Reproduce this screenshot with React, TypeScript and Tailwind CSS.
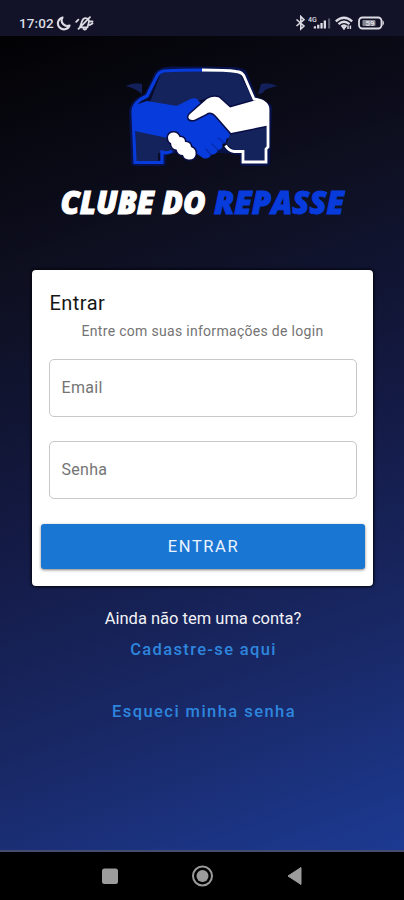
import React from "react";

function StatusBar() {
  return (
    <header className="flex h-9 shrink-0 items-center justify-between bg-[#121328] pt-[10px] pr-[19px] pl-[19px] text-[#dcdce4]">
      <div className="flex items-center">
        <span className="w-[37px] text-[13.5px] leading-4 font-medium tracking-[0.1px]">17:02</span>
        <svg className="h-4 w-4" viewBox="0 0 16 16" fill="none" stroke="currentColor" strokeWidth="2.1" strokeLinejoin="round">
          <path d="M6.500 2.500A6 6 0 1 0 13.500 10.500A5.600 5.600 0 0 1 6.500 2.500Z" />
        </svg>
        <svg className="ml-[3px] h-4 w-[19px]" viewBox="0 0 19 16" fill="none" stroke="currentColor" strokeWidth="1.8" strokeLinecap="round" strokeLinejoin="round">
          <path d="M5 12L7.2 5.8Q8.8 2.2 12.2 3.5Q14.6 4.6 13.8 7.5L12.5 12.3H5M8.5 14Q10 15 11.2 13.8M3.5 13.8L15 2.2M1.2 6.8L3.4 4.6M14.8 10L17.5 8.4M15.5 6.5H17.5" />
        </svg>
      </div>
      <div className="flex items-center">
        <svg className="h-4 w-[12px]" viewBox="0 0 12 16" fill="none" stroke="currentColor" strokeWidth="1.6">
          <path d="M1.500 4.500L9 11L5.800 14V1.500L9 4.700L1.500 11" />
        </svg>
        <svg className="ml-[1px] h-4 w-[24px]" viewBox="0 0 24 16" fill="currentColor">
          <text x="0" y="6.5" fontFamily="Roboto, sans-serif" fontSize="7" fontWeight="500">4G</text>
          <path d="M5.800 11.200h2.200v2.300H5.800zM9.100 9.800h2.300v3.700H9.100zM12.400 8h2.300v5.500h-2.300zM15.700 5.500h2.300v8h-2.300z" />
          <path opacity=".35" d="M20 3.500h2.200v10H20z" />
        </svg>
        <svg className="ml-[3px] h-4 w-[18px]" viewBox="0 0 18 16" fill="none" stroke="currentColor" strokeWidth="2.300">
          <path d="M.8 6.300Q9 -.8 17.200 6.300M3.500 9.200Q9 4.300 14.500 9.200M6.400 11.700Q9 9.300 11.600 11.700" />
          <path d="M8 12.500L9 14L10 12.500ZM13 10.500V14M15.400 10.500V14" strokeWidth="1.500" />
        </svg>
        <svg className="ml-[5px] h-4 w-[27px]" viewBox="0 0 27 16">
          <rect x="1" y="2.500" width="22.500" height="11" rx="3.400" fill="none" stroke="currentColor" strokeWidth="1.800" />
          <path d="M24.500 5Q27.500 8 24.500 11Z" fill="currentColor" />
          <rect x="4.500" y="5" width="13" height="6" rx="1" fill="#85858f" />
          <text x="12" y="11" textAnchor="middle" fontFamily="Roboto, sans-serif" fontSize="8" fontWeight="700" fill="currentColor">59</text>
        </svg>
      </div>
    </header>
  );
}

function Logo() {
  return (
    <svg className="h-[164px] w-[304px]" viewBox="50 60 304 164" role="img" aria-label="Clube do Repasse">
      <path d="M205 69.500H170Q161 70 157.500 74L147 96Q132 102 132 113L134 163H163V153L175 150L226 150L243 153V163H267L269 107L254 98L244 73Q240 70 232 70Z" fill="#090c24" stroke="#07114a" strokeWidth="6" strokeLinejoin="round" />
      <path d="M125.500 86Q134 82 142 84V94Q135 88 125.500 86ZM277.500 86Q269 82 261 84L258 94Q263 94 265 90Q269 88 277.500 86Z" fill="#13205a" />
      <path d="M161 73Q182 69 204 70Q226 70 240 74L253 100L230 107L218 97H212L194 102L177 107L150 102Z" fill="#14235c" />
      <path d="M136 130L168 137L178 150L170 153H158V161H136ZM231 133L267 125V161H244V150H234L226 144Z" fill="#14235c" />
      <path d="M203 70Q180 70 164 71Q159 72 157 76L147 96Q133 102 133 112L135 162.500H162V152Q167 154 172 151" fill="none" stroke="#083bdc" strokeWidth="3.200" />
      <path d="M147 102L177 107L191 100Q196 98 198 102L210 110L229 134Q229 138 225 138Q227 143 221 143Q223 149 217 149Q216 155 210 153Q210 158 204 157.500L177 139L135 130Q132 115 136 106Z" fill="#083bdc" stroke="#083bdc" strokeWidth="2" strokeLinejoin="round" />
      <path d="M218 138L225 143M212 144L218 150M206 149L211 155" stroke="#082ba8" strokeWidth="1.200" strokeLinecap="round" />
      <path d="M190 114L207 99Q213 95.500 219 97.500L230 107.500L253 101Q264 98 268 106V125.500L231 133L217 117Q211 110 206 114L195 119.500Q190 121 188.500 118Q188 116 190 114Z" fill="#fff" stroke="#080d45" strokeWidth="3" paintOrder="stroke" />
      <path d="M168 137Q169 132 174.500 132.500Q178 133 179.500 137Q185 137 185 142Q190.500 142 191 147Q196.500 149 195.500 155Q194 160 188.500 159.500Q184 159 183 155Q178 155 176.500 149.500Q171.500 149 171 143Q168 142 168 137Z" fill="#fff" stroke="#080d45" strokeWidth="3" paintOrder="stroke" />
      <path d="M202 70Q226 70 236 71.500Q242 72 244 76L254 99Q267.500 101 268 109V147L266 149V162H243V151.500H234Q229 151 225.500 145.500" fill="none" stroke="#fff" strokeWidth="2.800" />
      <g fontFamily="'Open Sans', sans-serif" fontSize="31" fontWeight="800" fontStyle="italic" strokeWidth="1">
        <text x="60.500" y="213.800" textLength="145" lengthAdjust="spacingAndGlyphs" fill="#fff" stroke="#fff">CLUBE DO</text>
        <text x="214" y="213.800" textLength="130" lengthAdjust="spacingAndGlyphs" fill="#083bdc" stroke="#083bdc">REPASSE</text>
      </g>
    </svg>
  );
}

function Field({ label, type }: { label: string; type: string }) {
  return (
    <input
      type={type}
      placeholder={label}
      aria-label={label}
      className="block h-[58px] w-full rounded-[5px] border border-[#c8c8c8] bg-white px-[12px] pb-[2px] text-[16px] tracking-[0.3px] outline-none placeholder:text-[#747474]"
    />
  );
}

export default function App() {
  return (
    <div className="flex h-[900px] w-[404px] flex-col overflow-hidden bg-black font-[Roboto,sans-serif]">
      <StatusBar />
      <main className="flex flex-1 flex-col items-center bg-[linear-gradient(160deg,#020204_0%,#0e0f20_26%,#141b47_55%,#192968_78%,#1c3a92_100%)] pt-6">
        <Logo />
        <form className="mt-[46px] h-[316px] w-[341px] rounded-[4px] bg-white px-[9px] pt-[21px] shadow-[0_0_3px_1px_#03040c]">
          <div className="pr-[7px] pl-2">
            <h1 className="pl-px text-[20px] leading-6 tracking-[0.45px] text-[#161616]">Entrar</h1>
            <p className="mt-[6px] text-center text-[14px] leading-5 tracking-[0.3px] text-[#747474]">Entre com suas informações de login</p>
            <div className="mt-[18px] flex flex-col gap-6">
              <Field label="Email" type="email" />
              <Field label="Senha" type="password" />
            </div>
          </div>
          <button type="button" className="mt-[25px] h-[45px] w-[324px] rounded-[3px] bg-[#1976d2] pt-[2px] pl-[2px] text-[16.500px] tracking-[1.600px] text-[#eaf3ff] shadow-[0_1px_3px_#00000080]">ENTRAR</button>
        </form>
        <p className="mt-[23px] ml-[2px] text-[16.500px] leading-5 text-[#f2f2f6]">Ainda não tem uma conta?</p>
        <a className="mt-[11px] ml-[3px] text-[16.500px] leading-5 font-medium tracking-[1.350px] text-[#2e86de]">Cadastre-se aqui</a>
        <a className="mt-[42px] ml-[4px] text-[16.500px] leading-5 font-medium tracking-[1.450px] text-[#2e86de]">Esqueci minha senha</a>
      </main>
      <nav className="flex h-[50px] shrink-0 items-center border-t-2 border-[#464b70] bg-black">
        <svg className="h-12 w-full" viewBox="0 0 404 48" fill="#9c9c9c">
          <rect x="102" y="16.500" width="16" height="15.500" rx="2.500" />
          <circle cx="202.500" cy="24" r="9.500" fill="none" stroke="#9c9c9c" strokeWidth="2" />
          <circle cx="202.500" cy="24" r="6" />
          <path d="M288 24L301 15.500V32.500Z" stroke="#9c9c9c" strokeWidth="1" strokeLinejoin="round" />
        </svg>
      </nav>
    </div>
  );
}
